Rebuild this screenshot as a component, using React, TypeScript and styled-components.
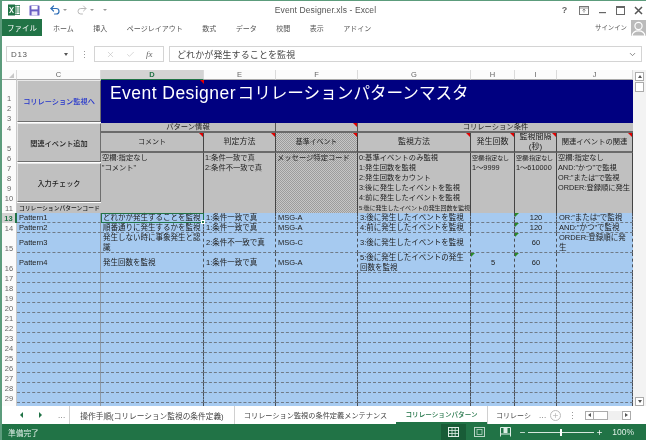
import React from "react";
import styled, { createGlobalStyle, css } from "styled-components";
import { Undo2, Redo2, X, Check, ChevronDown, Minus, Plus } from "lucide-react";

const Global = createGlobalStyle`
  html, body { margin: 0; padding: 0; background: #fff; }
  * { box-sizing: border-box; }
`;

const FONT = `"Liberation Sans", "Noto Sans CJK JP", sans-serif`;
const GREEN = "#217346";

const labels = [1,2,3,4,5,6,7,8,9,10,11,13,14,15,16,17,18,19,20,21,22,23,24,25,26,27,28,29,30];
const tallRows: Record<number, number> = { 1: 23, 5: 20, 15: 20, 16: 20 };
const rowTracks = labels.map(n => `${tallRows[n] ?? 10}px`).join(" ");
const lineOf = (n: number) => labels.indexOf(n) + 2;

const Frame = styled.div`
  width: 646px; height: 440px; overflow: hidden;
  display: flex; flex-direction: column;
  border-top: 1px solid #5c9c7c;
  border-left: 2px solid #5c9c7c;
  font-family: ${FONT}; color: #444; background: #fff;
  filter: blur(0.3px);
`;

/* title bar */
const TitleBar = styled.div`
  height: 18px; display: grid; grid-template-columns: 1fr auto 1fr; align-items: center;
  margin-left: -2px; padding-left: 8px; padding-right: 3px;
`;
const Quick = styled.div`display: flex; align-items: center; gap: 9px;`;
const QuickSplit = styled.div`display: flex; align-items: center; gap: 2px;`;
const Title = styled.div`font-size: 8.5px; color: #555; letter-spacing: 0.1px;`;
const WindowButtons = styled.div`display: flex; justify-content: flex-end; align-items: center; gap: 9px; color: #666;`;
const Help = styled.span`font-size: 9px; font-weight: 700; width: 11px; text-align: center;`;
const Caret = styled.span`width: 0; height: 0; border-left: 2px solid transparent; border-right: 2px solid transparent; border-top: 2px solid #999;`;

/* ribbon tabs */
const TabsRow = styled.div`height: 17px; display: flex; align-items: stretch;`;
const FileTab = styled.div`
  width: 40px; background: ${GREEN}; color: #fff; font-size: 7.5px;
  display: flex; align-items: center; justify-content: center;
`;
const RibbonTabs = styled.div`display: flex; align-items: center; gap: 19.5px; margin-left: 11px; flex: 1;`;
const RibbonTab = styled.span`font-size: 7px; color: #555; white-space: nowrap;`;
const SignIn = styled.div`display: flex; align-items: center; gap: 4px; font-size: 6.4px; color: #555;`;
const Avatar = styled.div`width: 15px; height: 16px; background: #bbb; display: flex; align-items: flex-end; justify-content: center; overflow: hidden;`;

/* formula bar */
const FormulaBar = styled.div`
  height: 34px; padding: 10px 4px 8px 4px; display: flex; align-items: stretch;
`;
const NameBox = styled.div`
  width: 68px; border: 1px solid #d4d4d4; font-size: 8px; color: #555; letter-spacing: .6px;
  display: flex; align-items: center; justify-content: space-between; padding: 0 5px 0 4px;
`;
const Dots = styled.div`
  width: 20px; display: flex; flex-direction: column; align-items: center; justify-content: center; gap: 2px;
  i { width: 1px; height: 1px; background: #999; display: block; }
`;
const FxGroup = styled.div`
  width: 70px; border: 1px solid #d4d4d4; display: flex; align-items: center; justify-content: space-around; padding: 0 5px; color: #bbb;
`;
const Fx = styled.span`font-family: "Liberation Serif", serif; font-style: italic; font-size: 9px; color: #666;`;
const FormulaInput = styled.div`
  flex: 1; margin-left: 5px; border: 1px solid #d4d4d4; font-size: 9px; color: #444; letter-spacing: .1px;
  display: flex; align-items: center; justify-content: space-between; padding: 0 4px 0 7px;
`;

/* sheet */
const SheetArea = styled.div`height: 336px; display: flex; align-items: stretch;`;
const Sheet = styled.div`
  width: 631px; height: 336px; overflow: hidden; display: grid; background: #fff;
  grid-template-columns: 15px 84px 103px 72px 82px 113px 44px 42px 76px;
  grid-template-rows: 10px ${rowTracks};
  font-size: 7.5px; color: #222;
`;

const ColHead = styled.div<{ $active?: boolean }>`
  font-size: 7.5px; color: #666; display: flex; align-items: center; justify-content: center;
  background: ${p => (p.$active ? "#d3d3d3" : "#fbfbfb")};
  border-right: 1px solid #dadada; border-bottom: 1px solid #a8a8a8;
  ${p => p.$active && css`color: ${GREEN}; font-weight: 700; border-bottom: 1px solid ${GREEN};`}
`;
const CornerHead = styled(ColHead)`
  position: relative;
  &::after { content: ""; position: absolute; right: 2px; bottom: 1px; border-left: 5px solid transparent; border-bottom: 5px solid #c8c8c8; }
`;
const RowHead = styled.div<{ $r: number; $active?: boolean }>`
  grid-column: 1; grid-row: ${p => p.$r};
  font-size: 7.5px; color: #666; display: flex; align-items: flex-end; justify-content: center; line-height: 9px;
  background: ${p => (p.$active ? "#d3d3d3" : "#fbfbfb")};
  border-right: 1px solid #c8c8c8;
  ${p => p.$active && css`color: ${GREEN}; font-weight: 700; border-right: 2px solid ${GREEN};`}
`;

type Mark = "red" | "green" | undefined;
const cellBase = css<{ $c: number; $r: number; $cs?: number; $rs?: number; $mark?: Mark }>`
  grid-column: ${p => p.$c} / span ${p => p.$cs ?? 1};
  grid-row: ${p => p.$r} / span ${p => p.$rs ?? 1};
  position: relative; overflow: hidden;
  ${p => p.$mark === "red" && css`
    &::after { content: ""; position: absolute; top: 0; right: 0; border-left: 4px solid transparent; border-top: 4px solid #e00000; }
  `}
  ${p => p.$mark === "green" && css`
    &::after { content: ""; position: absolute; top: 0; left: 0; border-right: 4px solid transparent; border-top: 4px solid #2a8a2a; }
  `}
`;
const hatch = css`
  background-color: #b4b4b4;
  background-image: repeating-conic-gradient(#9c9c9c 0 25%, #c6c6c6 0 50%);
  background-size: 2px 2px;
`;

const Banner = styled.div<any>`
  ${cellBase}
  background: #000080; color: #fff; padding: 1px 0 0 9px; font-size: 16.6px; line-height: 24px; white-space: nowrap;
  word-spacing: -3px;
`;
const BannerLatin = styled.span`font-size: 17.5px; letter-spacing: .45px; word-spacing: 0;`;
const Flag = styled.div<any>`${cellBase}`;
const Macro = styled.div<any>`
  ${cellBase}
  background: #c0c0c0; display: flex; align-items: center; justify-content: center; white-space: nowrap;
  border: 1px solid; border-color: #e8e8e8 #6e6e6e #6e6e6e #e8e8e8; margin-bottom: 1px;
  font-size: 7.2px; color: ${p => (p.$link ? "#2233cc" : "#222")}; font-weight: 500;
`;
const GreyFill = styled.div<any>`
  ${cellBase}
  background: #c0c0c0; white-space: nowrap; display: flex; align-items: center; line-height: 10px;
  justify-content: ${p => (p.$center ? "center" : "flex-start")};
  font-size: 7.3px;
  ${p => p.$rule && css`border-right: 1px solid #555;`}
`;
const CodeLabel = styled(GreyFill)`font-size: 5.8px; padding-left: 2px; font-weight: 500;`;
const GroupHead = styled(GreyFill)`
  border-bottom: 2px solid #6b6b6b;
`;
const HeadCell = styled.div<any>`
  ${cellBase}
  display: flex; align-items: center; justify-content: center; text-align: center; line-height: 10px; white-space: nowrap;
  font-size: ${p => p.$fs ?? 8}px; border-right: 1px solid #444; border-bottom: 2px solid #6b6b6b;
  ${p => (p.$hatch ? hatch : css`background: #c0c0c0;`)}
`;
const Note = styled.div<any>`
  ${cellBase}
  border-right: 1px solid #444; padding: 0 1px;
  font-size: 7.3px; line-height: 10px; white-space: nowrap;
  ${p => (p.$hatch ? hatch : css`background: #c0c0c0;`)}
`;
const NoteTiny = styled.div`font-size: 6px; line-height: 10px; letter-spacing: -.1px;`;

const Data = styled.div<any>`
  ${cellBase}
  background: #a6caf0; display: flex; align-items: center; padding: 0 1px 0 2px;
  line-height: 10px; font-size: 7.5px;
  border-bottom: 1px dashed #6f7b88;
  border-right: 1px ${p => (p.$solid ? "solid #8f9aa6" : "dashed #4a5058")};
  justify-content: ${p => (p.$center ? "center" : "flex-start")};
  white-space: ${p => (p.$wrap ? "normal" : "nowrap")};
  ${p => p.$sel && css`outline: 1px solid ${GREEN}; outline-offset: -1px;`}
`;
const SelectedCell = styled(Data)`overflow: visible; z-index: 2;`;
const Handle = styled.span`
  position: absolute; right: -2px; bottom: -2px; width: 4px; height: 4px; background: ${GREEN}; border: 1px solid #fff;
`;

/* vertical scrollbar */
const VBar = styled.div`
  width: 13px; background: #f3f3f3; display: flex; flex-direction: column; align-items: center; padding: 2px 0 0;
  justify-content: space-between;
`;
const ScrollBtn = styled.div`
  width: 9px; height: 9px; border: 1px solid #ababab; background: #fff; display: flex; align-items: center; justify-content: center; flex: none;
`;
const Thumb = styled.div`width: 9px; height: 10px; border: 1px solid #ababab; background: #fff; margin-top: 1px;`;
const VTop = styled.div`display: flex; flex-direction: column;`;
const Arrow = styled.span<{ $dir: "up" | "down" | "left" | "right" }>`
  width: 0; height: 0;
  ${p => p.$dir === "up" && css`border-left: 2px solid transparent; border-right: 2px solid transparent; border-bottom: 3px solid #555;`}
  ${p => p.$dir === "down" && css`border-left: 2px solid transparent; border-right: 2px solid transparent; border-top: 3px solid #555;`}
  ${p => p.$dir === "left" && css`border-top: 2px solid transparent; border-bottom: 2px solid transparent; border-right: 3px solid #555;`}
  ${p => p.$dir === "right" && css`border-top: 2px solid transparent; border-bottom: 2px solid transparent; border-left: 3px solid #555;`}
`;

/* sheet tabs */
const SheetTabs = styled.div`height: 18px; display: flex; align-items: stretch; font-size: 8px; color: #444;`;
const TabNav = styled.div`width: 67px; display: flex; align-items: center; padding-left: 18px; gap: 16px;`;
const NavArrowR = styled.span`
  width: 0; height: 0; border-top: 3px solid transparent; border-bottom: 3px solid transparent; border-left: 3px solid ${GREEN};
`;
const NavArrowL = styled.span`
  width: 0; height: 0; border-top: 3px solid transparent; border-bottom: 3px solid transparent; border-right: 3px solid ${GREEN};
`;
const Ellipsis = styled.span`font-size: 8px; color: #555; letter-spacing: .3px; align-self: center;`;
const SheetTab = styled.div<{ $active?: boolean; $w: number; $fs: number }>`
  width: ${p => p.$w}px; display: flex; align-items: center; justify-content: center; white-space: nowrap; overflow: hidden;
  border-left: 1px solid #d0d0d0; font-size: ${p => p.$fs}px;
  ${p => p.$active && css`
    border-left: none; color: ${GREEN}; border-bottom: 2px solid ${GREEN}; background: #fff; font-weight: 500;
  `}
`;
const AddCircle = styled.div`
  width: 11px; height: 11px; border: 1px solid #bbb; border-radius: 50%; color: #aaa; flex: none;
  display: flex; align-items: center; justify-content: center; margin: auto 0 auto 3px;
`;
const TabDots = styled(Dots)`width: 24px;`;
const HBar = styled.div`display: flex; align-items: center; height: 9px; width: 46px; background: #f0f0f0; align-self: center;`;
const HThumb = styled.div`width: 14px; height: 9px; border: 1px solid #ababab; background: #fff; border-left: none;`;
const HSpacer = styled.div`flex: 1;`;

/* status */
const Status = styled.div`
  height: 16px; margin-left: -2px; background: ${GREEN}; color: #dfeee6; font-size: 7.7px;
  display: flex; align-items: center; padding-left: 8px;
`;
const StatusLeft = styled.div`flex: 1;`;
const ViewBtn = styled.div<{ $active?: boolean }>`
  width: 25px; height: 16px; display: flex; align-items: center; justify-content: center;
  margin-right: 1px;
  background: ${p => (p.$active ? "#185c37" : "transparent")};
`;
const Zoom = styled.div`display: flex; align-items: center; color: #fff;`;
const Slider = styled.div`width: 66px; height: 1px; background: #d8e8de; margin: 0 2px; position: relative;`;
const SliderKnob = styled.span`position: absolute; left: 32px; top: -3px; width: 2px; height: 7px; background: #fff;`;
const Percent = styled.span`font-size: 8.5px; margin: 0 12px 0 9px; color: #dfeee6;`;

const ExcelLogo = () => (
  <svg width="12" height="12" viewBox="0 0 12 12">
    <rect x="4" y="1.5" width="8" height="9" fill="#fff" stroke="#217346" strokeWidth=".8" />
    <path d="M8 2v8M4 4h8M4 6h8M4 8h8" stroke="#217346" strokeWidth=".7" />
    <rect x="0" y="0.5" width="7" height="11" fill="#217346" />
    <path d="M1.6 3 5.4 9M5.4 3 1.6 9" stroke="#fff" strokeWidth="1.1" />
  </svg>
);
const SaveIcon = () => (
  <svg width="11" height="11" viewBox="0 0 11 11">
    <rect x=".5" y=".5" width="10" height="10" rx=".5" fill="#6a5fc4" />
    <rect x="2.4" y="1" width="6.2" height="3.4" fill="#fff" />
    <rect x="2.6" y="6.4" width="5.8" height="4" fill="#ece9f8" />
  </svg>
);
const GridIcon = () => (
  <svg width="11" height="10" viewBox="0 0 11 10" fill="none" stroke="#dfeee6" strokeWidth="1">
    <rect x=".5" y=".5" width="10" height="9" />
    <path d="M4 .5v9M7.2 .5v9M.5 3.5h10M.5 6.5h10" strokeWidth=".8" />
  </svg>
);
const PageIcon = () => (
  <svg width="11" height="10" viewBox="0 0 11 10" fill="none" stroke="#bcd6c8" strokeWidth="1">
    <rect x=".5" y=".5" width="10" height="9" />
    <rect x="3" y="2.5" width="5" height="5" strokeWidth=".8" />
  </svg>
);
const BreakIcon = () => (
  <svg width="11" height="10" viewBox="0 0 11 10" fill="none" stroke="#dfeee6" strokeWidth="1">
    <path d="M.5 9.500v-9h10v9" />
    <rect x="4" y=".5" width="3" height="5" fill="#dfeee6" />
    <path d="M.5 7h10" />
  </svg>
);
const Person = () => (
  <svg width="15" height="16" viewBox="0 0 15 16">
    <circle cx="7.5" cy="6" r="3.6" fill="#bbb" stroke="#fff" strokeWidth="1.2" />
    <path d="M1 16c.5-4 3-5.2 6.500-5.200S13.500 12 14 16z" fill="#bbb" stroke="#fff" strokeWidth="1.2" />
  </svg>
);
const RestoreIcon = () => (
  <svg width="10" height="9" viewBox="0 0 10 9" fill="none" stroke="#777">
    <rect x=".5" y=".5" width="9" height="8" />
    <path d="M5 6.500V3M3.500 4.500 5 3l1.500 1.500" strokeWidth=".8" />
    <path d="M.5 2h9" strokeWidth=".8" />
  </svg>
);
const MaxIcon = () => (
  <svg width="9" height="9" viewBox="0 0 9 9" fill="none" stroke="#666">
    <rect x=".5" y=".5" width="8" height="8" />
    <path d="M.5 1.500h8" />
  </svg>
);
const MinIcon = () => (
  <svg width="9" height="9" viewBox="0 0 9 9"><rect x="1" y="6" width="7" height="1.200" fill="#666" /></svg>
);
const CloseIcon = () => (
  <svg width="9" height="9" viewBox="0 0 9 9"><path d="M1 1l7 7M8 1 1 8" stroke="#555" strokeWidth="1.5" /></svg>
);

const columns = ["C", "D", "E", "F", "G", "H", "I", "J"];

const dataRows: { n: number; c: string[]; marks: Record<number, Mark> }[] = [
  { n: 13, c: ["Pattern1", "どれかが発生することを監視", "1:条件一致で真", "MSG-A", "3:後に発生したイベントを監視", "", "120", "OR:”または”で監視"], marks: { 8: "green" } },
  { n: 14, c: ["Pattern2", "順番通りに発生するかを監視", "1:条件一致で真", "MSG-A", "4:前に発生したイベントを監視", "", "120", "AND:”かつ”で監視"], marks: { 8: "green" } },
  { n: 15, c: ["Pattern3", "発生しない時に事象発生と認識", "2:条件不一致で真", "MSG-C", "3:後に発生したイベントを監視", "", "60", "ORDER:登録順に発生"], marks: { 8: "green" } },
  { n: 16, c: ["Pattern4", "発生回数を監視", "1:条件一致で真", "MSG-A", "5:後に発生したイベントの発生回数を監視", "5", "60", ""], marks: { 7: "green", 8: "green" } },
];

const heads = [
  { c: 3, t: ["コメント"], fs: 7 },
  { c: 4, t: ["判定方法"], fs: 8 },
  { c: 5, t: ["基準イベント"], fs: 6.9, hatch: true },
  { c: 6, t: ["監視方法"], fs: 8 },
  { c: 7, t: ["発生回数"], fs: 8 },
  { c: 8, t: ["監視間隔", "(秒)"], fs: 8 },
  { c: 9, t: ["関連イベントの関連"], fs: 7.3 },
];

export default function App() {
  const blanks = labels.filter(n => n >= 17);
  return (
    <>
      <Global />
      <Frame>
        <TitleBar>
          <Quick>
            <ExcelLogo />
            <SaveIcon />
            <QuickSplit><Undo2 size={12} color="#2f6fb8" strokeWidth={2.4} /><Caret /></QuickSplit>
            <QuickSplit><Redo2 size={12} color="#b9b9b9" strokeWidth={2} /><Caret /></QuickSplit>
            <Caret />
          </Quick>
          <Title>Event Designer.xls - Excel</Title>
          <WindowButtons>
            <Help>?</Help><RestoreIcon /><MinIcon /><MaxIcon /><CloseIcon />
          </WindowButtons>
        </TitleBar>

        <TabsRow>
          <FileTab>ファイル</FileTab>
          <RibbonTabs>
            {["ホーム", "挿入", "ページレイアウト", "数式", "データ", "校閲", "表示", "アドイン"].map(t => (
              <RibbonTab key={t}>{t}</RibbonTab>
            ))}
          </RibbonTabs>
          <SignIn>サインイン<Avatar><Person /></Avatar></SignIn>
        </TabsRow>

        <FormulaBar>
          <NameBox>D13<Arrow $dir="down" /></NameBox>
          <Dots><i /><i /><i /></Dots>
          <FxGroup><X size={9} strokeWidth={1.5} /><Check size={9} strokeWidth={1.5} /><Fx>fx</Fx></FxGroup>
          <FormulaInput>どれかが発生することを監視<ChevronDown size={9} color="#666" /></FormulaInput>
        </FormulaBar>

        <SheetArea>
          <Sheet>
            <CornerHead />
            {columns.map(c => <ColHead key={c} $active={c === "D"}>{c}</ColHead>)}

            {labels.map(n => (
              <RowHead key={n} $r={lineOf(n)} $active={n === 13}>{n === 30 ? "" : n}</RowHead>
            ))}

            <Macro $c={2} $r={lineOf(1)} $rs={3} $link>コリレーション監視へ</Macro>
            <Macro $c={2} $r={lineOf(4)} $rs={3}>関連イベント追加</Macro>
            <Macro $c={2} $r={lineOf(7)} $rs={4}>入力チェック</Macro>
            <CodeLabel $c={2} $r={lineOf(11)}>コリレーションパターンコード</CodeLabel>

            <Banner $c={3} $cs={7} $r={lineOf(1)} $rs={3}>
              <BannerLatin>Event Designer</BannerLatin> コリレーションパターンマスタ
            </Banner>
            <Flag $c={3} $r={lineOf(1)} $mark="red" />

            <GroupHead $c={3} $cs={2} $r={lineOf(4)} $center $rule>パターン情報</GroupHead>
            <GroupHead $c={5} $r={lineOf(4)} $mark="red" $rule />
            <GroupHead $c={6} $cs={4} $r={lineOf(4)} $center>コリレーション条件</GroupHead>

            {heads.map(h => (
              <HeadCell key={h.c} $c={h.c} $r={lineOf(5)} $mark="red" $hatch={h.hatch} $fs={h.fs}>
                <span>{h.t.map(l => <div key={l}>{l}</div>)}</span>
              </HeadCell>
            ))}

            <Note $c={3} $r={lineOf(6)} $rs={6}>空欄:指定なし<br />”コメント”</Note>
            <Note $c={4} $r={lineOf(6)} $rs={6}>1:条件一致で真<br />2:条件不一致で真</Note>
            <Note $c={5} $r={lineOf(6)} $rs={6} $hatch>メッセージ特定コード</Note>
            <Note $c={6} $r={lineOf(6)} $rs={6}>
              0:基準イベントのみ監視<br />1:発生回数を監視<br />2:発生回数をカウント<br />
              3:後に発生したイベントを監視<br />4:前に発生したイベントを監視
              <NoteTiny>5:後に発生したイベントの発生回数を監視</NoteTiny>
            </Note>
            <Note $c={7} $r={lineOf(6)} $rs={6}><NoteTiny>空欄:指定なし</NoteTiny>1〜9999</Note>
            <Note $c={8} $r={lineOf(6)} $rs={6}><NoteTiny>空欄:指定なし</NoteTiny>1〜610000</Note>
            <Note $c={9} $r={lineOf(6)} $rs={6}>
              空欄:指定なし<br />AND:”かつ”で監視<br />OR:”または”で監視<br />ORDER:登録順に発生
            </Note>

            {dataRows.map(row =>
              row.c.map((text, i) => {
                const col = i + 2;
                const selected = row.n === 13 && col === 3;
                const Cell = selected ? SelectedCell : Data;
                return (
                  <Cell
                    key={`${row.n}-${col}`}
                    $c={col}
                    $r={lineOf(row.n)}
                    $solid={col === 2}
                    $sel={selected}
                    $wrap={row.n >= 15}
                    $center={col === 7 || col === 8}
                    $mark={row.marks[col]}
                  >
                    <span>{text}</span>
                    {selected && <Handle />}
                  </Cell>
                );
              })
            )}

            {blanks.map(n =>
              columns.map((c, i) => (
                <Data key={`${n}-${c}`} $c={i + 2} $r={lineOf(n)} $solid={i === 0} />
              ))
            )}
          </Sheet>
          <VBar>
            <VTop>
              <ScrollBtn><Arrow $dir="up" /></ScrollBtn>
              <Thumb />
            </VTop>
            <ScrollBtn><Arrow $dir="down" /></ScrollBtn>
          </VBar>
        </SheetArea>

        <SheetTabs>
          <TabNav>
            <NavArrowL /><NavArrowR /><Ellipsis>...</Ellipsis>
          </TabNav>
          <SheetTab $w={165} $fs={7.7}>操作手順(コリレーション監視の条件定義)</SheetTab>
          <SheetTab $w={162} $fs={7.2}>コリレーション監視の条件定義メンテナンス</SheetTab>
          <SheetTab $active $w={91} $fs={6.6}>コリレーションパターン</SheetTab>
          <SheetTab $w={52} $fs={7}>コリレーシ</SheetTab>
          <Ellipsis>...</Ellipsis>
          <AddCircle><Plus size={7} strokeWidth={2} /></AddCircle>
          <TabDots><i /><i /><i /></TabDots>
          <HBar>
            <ScrollBtn><Arrow $dir="left" /></ScrollBtn>
            <HThumb />
            <HSpacer />
            <ScrollBtn><Arrow $dir="right" /></ScrollBtn>
          </HBar>
        </SheetTabs>

        <Status>
          <StatusLeft>準備完了</StatusLeft>
          <ViewBtn $active><GridIcon /></ViewBtn>
          <ViewBtn><PageIcon /></ViewBtn>
          <ViewBtn><BreakIcon /></ViewBtn>
          <Zoom>
            <Minus size={7} strokeWidth={2.5} />
            <Slider><SliderKnob /></Slider>
            <Plus size={7} strokeWidth={2.5} />
            <Percent>100%</Percent>
          </Zoom>
        </Status>
      </Frame>
    </>
  );
}
